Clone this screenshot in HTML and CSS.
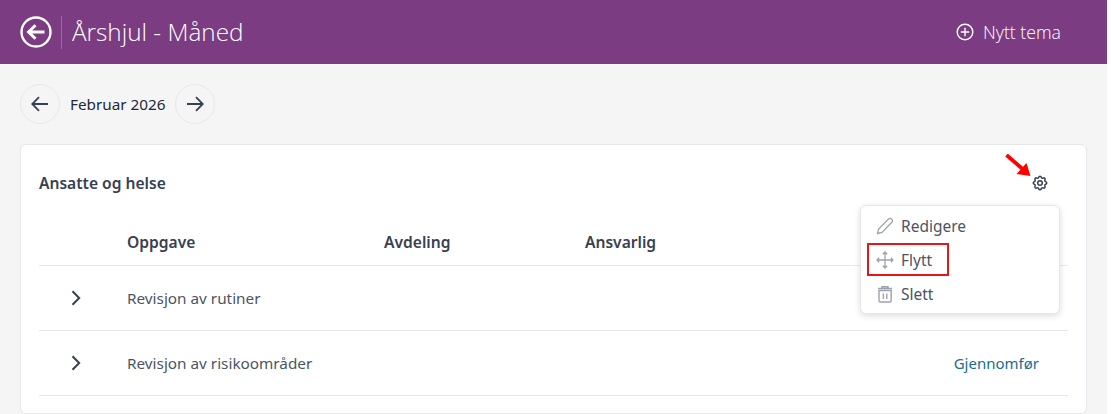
FILE: index.html
```html
<!DOCTYPE html>
<html lang="no">
<head>
<meta charset="utf-8">
<title>Årshjul - Måned</title>
<link rel="stylesheet" href="styles.css">
</head>
<body>
<div class="page">
  <header class="topbar">
    <div class="topbar-left">
      <svg class="back-icon" width="32" height="32" viewBox="0 0 32 32" fill="none" stroke="#fff"><circle cx="16" cy="16" r="14.5" stroke-width="2.4"/><path d="M24.5 16H9M15.5 9.2 8.6 16l6.9 6.8" stroke-width="3"/></svg>
      <span class="divider"></span>
      <h1 class="title">Årshjul - Måned</h1>
    </div>
    <div class="new-theme">
      <svg width="18" height="18" viewBox="0 0 18 18" fill="none" stroke="#fff" stroke-width="1.4"><circle cx="9" cy="9" r="7.8"/><path d="M9 4.8v8.4M4.8 9h8.4"/></svg>
      <span>Nytt tema</span>
    </div>
  </header>
  <main class="content">
    <nav class="month-nav">
      <button class="round"><svg width="18" height="16" viewBox="0 0 18 16" fill="none" stroke="#374151" stroke-width="1.8"><path d="M17 8H1.500M8 1.200 1.200 8 8 14.800"/></svg></button>
      <span class="month">Februar 2026</span>
      <button class="round"><svg width="18" height="16" viewBox="0 0 18 16" fill="none" stroke="#374151" stroke-width="1.8"><path d="M1 8h15.500M10 1.200 16.800 8 10 14.800"/></svg></button>
    </nav>
    <section class="card">
      <div class="card-head">
        <h2 class="card-title">Ansatte og helse</h2>
        <div class="gear">
          <svg width="18" height="18" viewBox="0 0 24 24" fill="none" stroke="#374151" stroke-width="2" stroke-linecap="round" stroke-linejoin="round"><path d="M10.330 4.320c.43-1.760 2.920-1.760 3.350 0a1.720 1.720 0 0 0 2.570 1.070c1.540-.94 3.300.83 2.370 2.370a1.720 1.720 0 0 0 1.060 2.570c1.760.43 1.760 2.920 0 3.350a1.720 1.720 0 0 0-1.070 2.570c.94 1.540-.83 3.300-2.370 2.370a1.720 1.720 0 0 0-2.570 1.060c-.43 1.760-2.920 1.760-3.350 0a1.720 1.720 0 0 0-2.570-1.070c-1.540.94-3.300-.83-2.370-2.370a1.720 1.720 0 0 0-1.060-2.570c-1.760-.43-1.760-2.920 0-3.350a1.720 1.720 0 0 0 1.070-2.570c-.94-1.540.83-3.300 2.370-2.370a1.720 1.720 0 0 0 2.570-1.060Z"/><circle cx="12" cy="12" r="3"/></svg>
        </div>
        <svg class="arrow" width="30" height="30" viewBox="0 0 30 30"><path d="M1.500 1 17 14.500" stroke="#f00" stroke-width="3.800" fill="none"/><path d="M25.500 22 11.500 20 21.500 9Z" fill="#f00"/></svg>
      </div>
      <div class="row head-row">
        <span></span><span>Oppgave</span><span>Avdeling</span><span>Ansvarlig</span><span></span>
      </div>
      <div class="row">
        <svg class="chev" width="12" height="16" viewBox="0 0 12 16" fill="none" stroke="#374151" stroke-width="2"><path d="M2.500 1.200 9.200 8l-6.700 6.800"/></svg>
        <span class="task">Revisjon av rutiner</span><span></span><span></span><span></span>
      </div>
      <div class="row">
        <svg class="chev" width="12" height="16" viewBox="0 0 12 16" fill="none" stroke="#374151" stroke-width="2"><path d="M2.500 1.200 9.200 8l-6.700 6.800"/></svg>
        <span class="task">Revisjon av risikoområder</span><span></span><span></span><a class="action">Gjennomfør</a>
      </div>
      <ul class="menu">
        <li class="item">
          <svg width="18" height="18" viewBox="0 0 18 18" fill="none" stroke="#9ca3af" stroke-width="1.300"><path d="M1.500 16.500 2.600 12 12.600 2a2 2 0 0 1 2.900 0l.4.4a2 2 0 0 1 0 2.900L6 15.400Z"/></svg>
          <span>Redigere</span>
        </li>
        <li class="item">
          <svg width="18" height="18" viewBox="0 0 18 18" fill="none" stroke="#9ca3af" stroke-width="1.300"><path d="M9 1v16M1 9h16M6.800 3.200 9 1l2.200 2.200M6.800 14.800 9 17l2.200-2.200M3.200 6.800 1 9l2.200 2.200M14.800 6.800 17 9l-2.200 2.200"/></svg>
          <span>Flytt</span>
        </li>
        <li class="item">
          <svg width="18" height="18" viewBox="0 0 18 18" fill="none" stroke="#9ca3af" stroke-width="1.400"><path d="M3 5.500h12.200v10a1.500 1.500 0 0 1-1.500 1.500H4.500a1.500 1.500 0 0 1-1.500-1.500ZM2 3.500h14M6 3.500V1.800h6v1.700M7.400 8.500v5.500M10.800 8.500v5.500"/></svg>
          <span>Slett</span>
        </li>
      </ul>
      <div class="highlight"></div>
    </section>
  </main>
</div>
</body>
</html>
```
FILE: styles.css
```css
* { box-sizing: border-box; }
html, body { margin: 0; height: 100%; background: #fff; overflow: hidden; }
body { font-family: "Noto Sans", "Open Sans", sans-serif; color: #374151; }
.page { width: 1107px; height: 414px; background: #f5f5f5; }
.topbar { height: 64px; background: #7b3c81; color: #fff; display: flex; align-items: center; justify-content: space-between; padding: 0 46px 0 20px; }
.topbar-left { display: flex; align-items: center; }
.back-icon { display: block; }
.divider { width: 1px; height: 33px; background: #9a6aa0; margin: 0 10px 0 9px; }
.title { margin: 0; font-family: "Open Sans", sans-serif; font-weight: 300; font-size: 24.300px; line-height: 32px; }
.new-theme { display: flex; align-items: center; gap: 9px; font-family: "Open Sans", sans-serif; font-weight: 300; font-size: 17.700px; }
.new-theme svg { display: block; }
.content { padding: 20px 20px 0; }
.month-nav { display: flex; align-items: center; height: 40px; }
.round { width: 40px; height: 40px; border: 1px solid #e5e7eb; border-radius: 50%; background: #f5f5f5; padding: 0; display: flex; align-items: center; justify-content: center; }
.month { margin: 0 9px 0 10px; font-size: 15.300px; color: #1f2937; }
.card { position: relative; margin-top: 20px; height: 270px; background: #fff; border: 1px solid #e5e7eb; border-radius: 6px; padding: 0 18px; }
.card-head { position: relative; height: 76px; display: flex; align-items: center; justify-content: space-between; padding-bottom: 1px; }
.card-title { margin: 0; font-size: 15.600px; font-weight: 600; color: #374151; }
.gear { width: 18px; height: 18px; margin-right: 19px; margin-top: 1px; }
.gear svg { display: block; }
.arrow { position: absolute; top: 9px; left: 966px; }
.row { display: grid; grid-template-columns: 88px 257px 201px 1fr auto; align-items: center; height: 65px; border-bottom: 1px solid #e5e7eb; font-size: 15px; color: #4b5563; padding-right: 29px; }
.row .chev { margin-left: 31px; display: block; }
.task { font-size: 15.300px; }
.head-row { height: 45px; font-size: 15.600px; font-weight: 600; color: #374151; padding-bottom: 3px; }
.action { color: #1a6b91; }
.menu { position: absolute; top: 60px; left: 839px; width: 200px; height: 109px; margin: 0; padding: 3px 0; list-style: none; background: #fff; border: 1px solid #e5e7eb; border-radius: 6px; box-shadow: 0 2px 6px rgba(0,0,0,.14); }
.item { display: flex; align-items: center; gap: 7px; height: 34px; padding-left: 15px; font-size: 15.500px; color: #4b5563; }
.item svg { display: block; }
.highlight { position: absolute; top: 98px; left: 846px; width: 82px; height: 33px; border: 2px solid #e8151b; }
```
